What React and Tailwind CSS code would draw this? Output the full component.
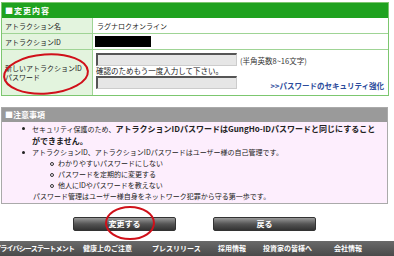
export default function App() {
  const font = { fontFamily: '"Noto Sans CJK JP", "Noto Sans", sans-serif' };
  const inputCls =
    "w-[141px] h-[13px] bg-[#e6e6e6] border-t-2 border-l-2 border-t-[#555] border-l-[#555] border-b border-r border-b-[#ccc] border-r-[#ccc]";
  const Dot = () => (
    <span className="w-[30px] flex justify-end pr-[7px] pt-[4px]">
      <span className="w-[3px] h-[3px] rounded-full bg-[#222]"></span>
    </span>
  );
  const Circ = () => (
    <span className="w-[56px] flex justify-end pr-[4px] pt-[4px]">
      <span className="w-[4px] h-[4px] rounded-full border border-[#333]"></span>
    </span>
  );
  return (
    <div className="relative w-[394px] h-[256px] bg-white overflow-hidden" style={font}>
      <div className="pt-[2px] pl-[1px]">
        {/* 変更内容 */}
        <div className="w-[388px] border border-[#7cc76f]">
          <div className="h-[15px] bg-[#1fa21f] text-white text-[8px] font-bold leading-[15px] pl-[3px] tracking-[1px]">■変更内容</div>
          <div className="flex h-[16px] border-b border-[#9fd495]">
            <div className="w-[91px] bg-[#e3f4de] border-r border-[#9fd495] text-[7px] leading-[16px] pl-[3px] text-[#222]">アトラクション名</div>
            <div className="flex-1 text-[7px] leading-[16px] pl-[4px] text-[#222]">ラグナロクオンライン</div>
          </div>
          <div className="flex h-[16px] border-b border-[#9fd495]">
            <div className="w-[91px] bg-[#e3f4de] border-r border-[#9fd495] text-[7px] leading-[16px] pl-[3px] text-[#222]">アトラクションID</div>
            <div className="flex-1 flex items-center pl-[2px]">
              <div className="w-[56px] h-[11px] bg-black"></div>
            </div>
          </div>
          <div className="flex h-[45px]">
            <div className="w-[91px] bg-[#e3f4de] border-r border-[#9fd495] text-[7px] leading-[9px] pl-[3px] flex flex-col justify-center text-[#222] whitespace-nowrap">
              <span>新しいアトラクションID</span>
              <span>パスワード</span>
            </div>
            <div className="flex-1 pl-[3px] pt-[3px] relative">
              <div className="flex items-center">
                <div className={inputCls}></div>
                <span className="text-[7.5px] text-[#333] ml-[3px] mt-[2px] leading-[10px]">(半角英数8~16文字)</span>
              </div>
              <div className="text-[7.5px] leading-[10px] text-[#222]">確認のためもう一度入力して下さい。</div>
              <div className={inputCls}></div>
              <div className="absolute right-[4px] bottom-[4px] text-[7.5px] font-bold text-[#2b4b9b] leading-[10px]">&gt;&gt;パスワードのセキュリティ強化</div>
            </div>
          </div>
        </div>

        {/* 注意事項 */}
        <div className="w-[387px] mt-[11px] border border-[#aaa]">
          <div className="h-[14px] bg-[#9a9a9a] text-white text-[8px] font-bold leading-[14px] pl-[3px]">■注意事項</div>
          <div className="h-[81px] bg-[#fdeefd] text-[7px] leading-[11px] text-[#222] pt-[1px] whitespace-nowrap">
            <div className="flex">
              <Dot />
              <div>
                <span>セキュリティ保護のため、</span>
                <span className="font-bold text-[8px]">アトラクションIDパスワードはGungHo-IDパスワードと同じにすること</span>
                <br />
                <span className="font-bold text-[8px]">ができません。</span>
              </div>
            </div>
            <div className="flex">
              <Dot />
              <div>アトラクションID、アトラクションIDパスワードはユーザー様の自己管理です。</div>
            </div>
            <div className="flex"><Circ /><span>わかりやすいパスワードにしない</span></div>
            <div className="flex"><Circ /><span>パスワードを定期的に変更する</span></div>
            <div className="flex"><Circ /><span>他人にIDやパスワードを教えない</span></div>
            <div className="pl-[31px]">パスワード管理はユーザー様自身をネットワーク犯罪から守る第一歩です。</div>
          </div>
        </div>

        {/* Buttons */}
        <div className="flex mt-[13px] pl-[72px] gap-[37px]">
          <div className="w-[103px] h-[14px] rounded-[2px] bg-gradient-to-b from-[#9a9a9a] via-[#555] to-[#333] border border-[#333] text-white text-[8px] font-bold leading-[12px] text-center">変更する</div>
          <div className="w-[103px] h-[14px] rounded-[2px] bg-gradient-to-b from-[#9a9a9a] via-[#555] to-[#333] border border-[#333] text-white text-[8px] font-bold leading-[12px] text-center">戻る</div>
        </div>
      </div>

      {/* Footer */}
      <div className="absolute left-0 right-0 top-[241px] h-[15px] bg-gradient-to-b from-[#6a6a6a] to-[#4a4a4a] overflow-hidden">
        <div className="flex text-white text-[7px] font-bold leading-[15px] whitespace-nowrap ml-[-6px]">
          <span className="w-[89px] tracking-[-0.8px]">プライバシーステートメント</span>
          <span className="w-[69px]">健康上のご注意</span>
          <span className="w-[66px]">プレスリリース</span>
          <span className="w-[45px]">採用情報</span>
          <span className="w-[71px]">投資家の皆様へ</span>
          <span>会社情報</span>
        </div>
      </div>

      {/* red ellipses */}
      <svg className="absolute left-0 top-0 pointer-events-none" width="394" height="256">
        <ellipse cx="46" cy="74" rx="42" ry="19.5" fill="none" stroke="#d0101a" strokeWidth="2" transform="rotate(-4 46 74)" />
        <ellipse cx="130" cy="223" rx="24" ry="16" fill="none" stroke="#d0101a" strokeWidth="2" />
      </svg>
    </div>
  );
}
